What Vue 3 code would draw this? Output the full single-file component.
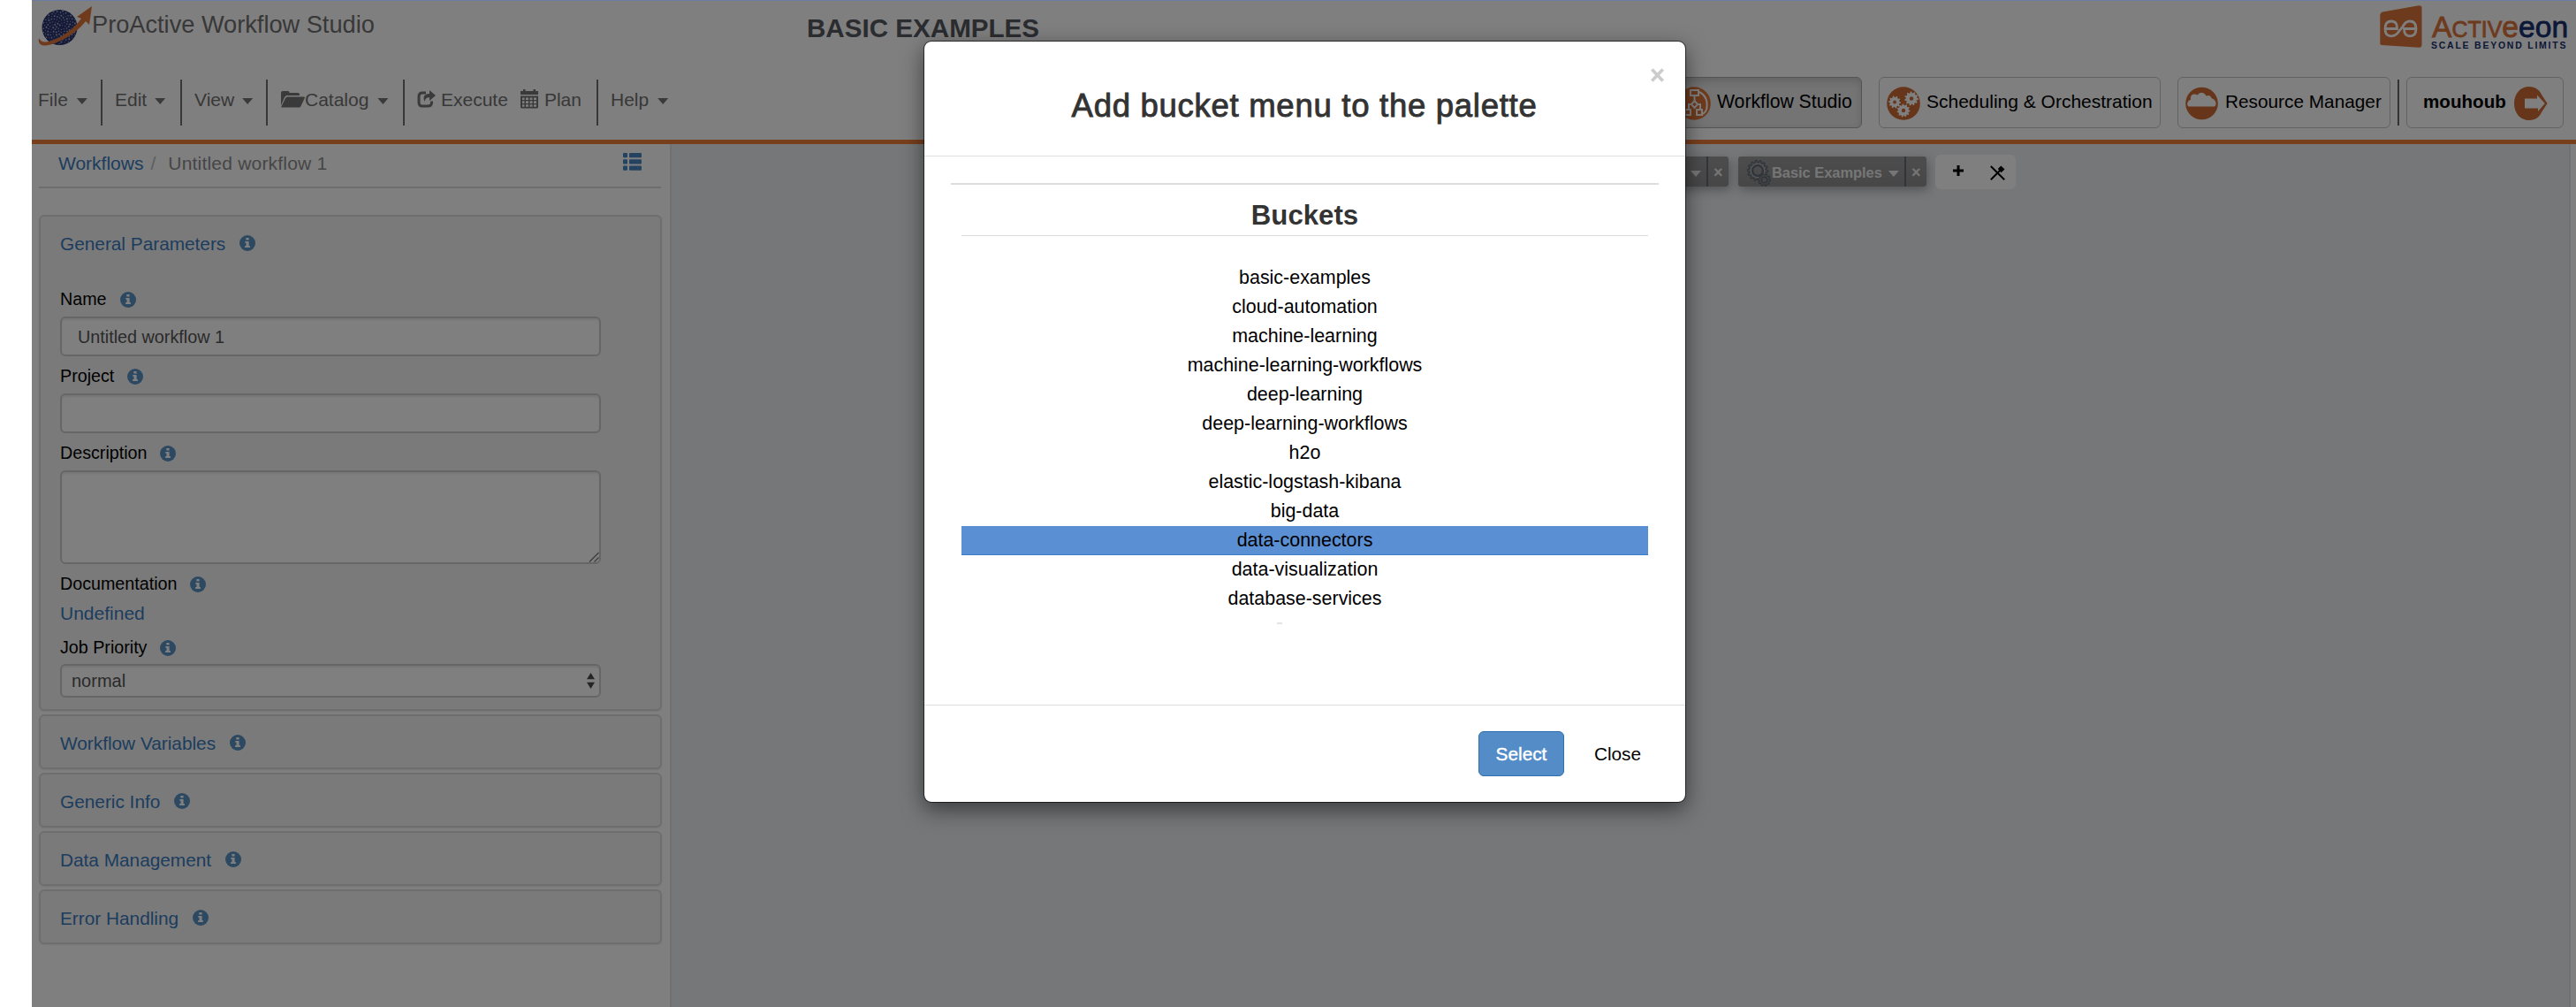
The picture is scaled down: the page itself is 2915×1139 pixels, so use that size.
<script setup>
import { h } from 'vue'

const InfoIcon = () =>
  h('svg', { class: 'info', viewBox: '0 0 18 18', width: 18, height: 18 }, [
    h('circle', { cx: 9, cy: 9, r: 9, fill: '#5a93c4' }),
    h('path', { d: 'M7.3 3h3.3v2.5H7.3zM6.3 7h4.3v5h1.3v2H6.1v-2h1.4V8.8H6.3z', fill: '#fff' }),
  ])

const sections = ['Workflow Variables', 'Generic Info', 'Data Management', 'Error Handling']
const buckets = [
  'basic-examples',
  'cloud-automation',
  'machine-learning',
  'machine-learning-workflows',
  'deep-learning',
  'deep-learning-workflows',
  'h2o',
  'elastic-logstash-kibana',
  'big-data',
  'data-connectors',
  'data-visualization',
  'database-services',
]
const selected = 'data-connectors'

// Cog outlines for the scheduler icon and the palette tab icon
function cog(cx, cy, r, teeth, depth) {
  const pts = []
  for (let i = 0; i < teeth * 4; i++) {
    const a = (i / (teeth * 4)) * Math.PI * 2
    const rr = i % 4 < 2 ? r : r - depth
    pts.push(`${(cx + rr * Math.cos(a)).toFixed(2)},${(cy + rr * Math.sin(a)).toFixed(2)}`)
  }
  return pts.join(' ')
}

// Light specks scattered over the globe
const specks = []
for (let i = 1; i < 120; i++) {
  const a = i * 2.39996
  const r = 19.4 * Math.sqrt(i / 120)
  specks.push({ x: 24.5 + r * Math.cos(a), y: 25 + r * Math.sin(a), r: 0.5 + ((i * 7) % 5) * 0.13 })
}
</script>

<template>
  <div class="screen">
    <div class="page">
      <header>
        <div class="brand-row">
          <svg class="globe" width="62" height="50" viewBox="0 0 62 50">
            <circle cx="24.5" cy="25" r="20" fill="#2a3570" />
            <circle v-for="(s, i) in specks" :key="i" :cx="s.x" :cy="s.y" :r="s.r" fill="#a5abc9" />
            <path d="M1 37C-1 47 9 47 19 43C36 36 47 27 54 18L58 22L61 1L44 13L49 15C40 27 29 35 18 39C10 42 4 43 1 37Z" fill="#e0773a" />
          </svg>
          <span class="app-name">ProActive Workflow Studio</span>
          <span class="workflow-name">BASIC EXAMPLES</span>
          <svg class="emblem" width="48" height="48" viewBox="0 0 48 48">
            <path d="M3 7.500L44 .2Q47.500 0 47.500 3V44.500Q47.500 48 44 47.700L2 45Q.3 44.800.3 43V11Q.5 8.200 3 7.500Z" fill="#dd753d" />
            <path d="M7 26.500H19.500Q20 18 13 18Q6 18 6 26.500Q6 34.800 13 34.800Q18 34.800 22 29L26 24Q29 18 34 18Q41 18 41 26.500Q41 34.800 34 34.800Q27.500 34.800 27.500 26.500H40" fill="none" stroke="#fff" stroke-width="2.800" />
          </svg>
          <div class="company">
            <div class="company-name"><span class="ac">A<small>CTIV</small>e</span><span class="eon">eon</span></div>
            <div class="tagline">SCALE BEYOND LIMITS</div>
          </div>
        </div>

        <div class="menu-row">
          <nav>
            <span class="item file">File<i class="caret" /></span>
            <span class="item edit">Edit<i class="caret" /></span>
            <span class="item view">View<i class="caret" /></span>
            <span class="item catalog">
              <svg width="27" height="20" viewBox="0 0 27 20" fill="#747474">
                <path d="M0 17V3Q0 1 2 1H8Q9.500 1 9.500 3H19Q21 3 21 5V6H7Q5 6 4 8L.5 16Z" />
                <path d="M7.500 7.500H26Q27.300 7.500 26.700 9L22.500 18Q22 19.500 20 19.500H1Q0 19.500.6 18L5 9Q5.800 7.500 7.500 7.500Z" />
              </svg>Catalog<i class="caret" />
            </span>
            <span class="item run">
              <svg class="exec" width="22" height="20" viewBox="0 0 22 20">
                <path d="M10 3H6Q2 3 2 7V14Q2 18 6 18H12Q16.500 18 16.500 14V12.500" fill="none" stroke="#747474" stroke-width="3" />
                <path d="M14 0L21 6L14 12V8.200Q9 8 8.500 13Q5 4.500 14 4Z" fill="#747474" />
              </svg>Execute
              <svg class="cal" width="20" height="22" viewBox="0 0 20 22" fill="#747474">
                <path d="M3 0H5.500V2H14.500V0H17V2H20V6H0V2H3Z" />
                <path fill-rule="evenodd" d="M0 7.500H20V20Q20 21.500 18.500 21.500H1.500Q0 21.500 0 20ZM2 9.500V12H4.500V9.500ZM6 9.500V12H9V9.500ZM10.500 9.500V12H13.500V9.500ZM15 9.500V12H18V9.500ZM2 13.200V16H4.500V13.200ZM6 13.200V16H9V13.200ZM10.500 13.200V16H13.500V13.200ZM15 13.200V16H18V13.200ZM2 17.200V19.700H4.500V17.200ZM6 17.200V19.700H9V17.200ZM10.500 17.200V19.700H13.500V17.200ZM15 17.200V19.700H18V17.200Z" />
              </svg>Plan
            </span>
            <span class="item help">Help<i class="caret" /></span>
          </nav>
          <div class="portals">
            <div class="portal studio active">
              <svg width="38" height="38" viewBox="0 0 38 38">
                <circle cx="19" cy="19" r="18.800" fill="#e0773a" />
                <g fill="none" stroke="#fff" stroke-width="2">
                  <rect x="15" y="4" width="9" height="6" />
                  <path d="M19.500 10V17M25 6Q36 12 33 26Q32 29 29 31M19.500 16L23 20L19.500 24L16 20ZM16 20H13V26M23 20H26V26" />
                  <rect x="9" y="26" width="6" height="6" /><rect x="22" y="26" width="6" height="6" />
                </g>
              </svg>
              <span>Workflow Studio</span>
            </div>
            <div class="portal sched">
              <svg width="38" height="38" viewBox="0 0 38 38">
                <circle cx="19" cy="19" r="18.800" fill="#cc6b34" />
                <g fill="#fff">
                  <polygon :points="cog(9, 17.500, 7, 10, 1.600)" />
                  <polygon :points="cog(28, 13.500, 8, 11, 1.800)" />
                  <polygon :points="cog(19, 27, 7.500, 11, 1.600)" />
                </g>
                <g fill="#cc6b34"><circle cx="9" cy="17.500" r="1.900" /><circle cx="28" cy="13.500" r="2.200" /><circle cx="19" cy="27" r="2.200" /></g>
              </svg>
              <span>Scheduling &amp; Orchestration</span>
            </div>
            <div class="portal resource">
              <svg width="37" height="38" viewBox="0 0 37 38">
                <circle cx="18.500" cy="19" r="18.300" fill="#cc6b34" />
                <path d="M3.500 22.500Q1 20 3 17Q3.500 15 6 14.800Q5 9 10 8.500Q12 8.300 13.500 9.500Q17 5 21.500 8Q23 9 23.500 10.500Q28 8.500 29.500 13Q35 15 34.500 20Q34 22.500 32.500 22.500Z" fill="#fff" />
              </svg>
              <span>Resource Manager</span>
            </div>
            <i class="bar" />
            <div class="portal user">
              <span>mouhoub</span>
              <svg width="38" height="38" viewBox="0 0 38 38">
                <path d="M17 0C24 0 29 4 31 9L37.500 19L31 29C29 34 24 38 17 38C7 38 0 30 0 19C0 8 7 0 17 0Z" fill="#cc6b34" />
                <path d="M12 13.500H26V9.500L34.800 19L27 28V24.500H12Z" fill="#fff" />
              </svg>
            </div>
          </div>
        </div>
      </header>

      <main>
        <aside>
          <div class="crumbs">
            <a>Workflows</a><span class="slash">/</span><span class="here">Untitled workflow 1</span>
            <svg class="list-icon" width="21" height="20" viewBox="0 0 21 20" fill="#4a86c2">
              <rect width="5" height="5.300" rx="1" /><rect x="7" width="14" height="5.300" rx="1" />
              <rect y="7.200" width="5" height="5.300" rx="1" /><rect x="7" y="7.200" width="14" height="5.300" rx="1" />
              <rect y="14.400" width="5" height="5.300" rx="1" /><rect x="7" y="14.400" width="14" height="5.300" rx="1" />
            </svg>
          </div>

          <section class="well general">
            <h4>General Parameters<InfoIcon /></h4>
            <label class="first">Name<InfoIcon /></label>
            <input type="text" value="Untitled workflow 1" />
            <label>Project<InfoIcon /></label>
            <input type="text" value="" />
            <label>Description<InfoIcon /></label>
            <div class="area">
              <textarea />
              <svg width="12" height="12" viewBox="0 0 12 12" stroke="#777" stroke-width="1.200"><path d="M1 11.500L11.500 1M6.500 11.500L11.500 6.500" /></svg>
            </div>
            <label class="doc">Documentation<InfoIcon /></label>
            <a class="undefined">Undefined</a>
            <label class="prio">Job Priority<InfoIcon /></label>
            <div class="select">
              normal
              <svg width="9" height="18" viewBox="0 0 9 18" fill="#4a4a4a"><path d="M0 7.300L4.500 0L9 7.300ZM0 10.700H9L4.500 18Z" /></svg>
            </div>
          </section>

          <section v-for="s in sections" :key="s" class="well">
            <h4>{{ s }}<InfoIcon /></h4>
          </section>
        </aside>

        <div class="canvas">
          <div class="tab first-tab"><i class="caret" /><b class="x">×</b></div>
          <div class="tab">
            <svg width="27" height="31" viewBox="0 0 27 31" fill="none" stroke="#5f6974">
              <polygon :points="cog(12, 13, 11.500, 14, 2)" stroke-width="1.300" />
              <circle cx="12" cy="13" r="6" stroke-width="2.400" />
              <circle cx="12" cy="13" r="7.600" stroke="#b5b9bd" stroke-width=".8" />
              <polygon :points="cog(19.500, 23.500, 7, 10, 1.500)" fill="#8c8c8c" stroke-width="1.200" />
              <circle cx="19.500" cy="23.500" r="3.200" stroke-width="1.600" />
            </svg>
            <span class="tab-name">Basic Examples</span><i class="caret" /><b class="x">×</b>
          </div>
          <div class="tools">
            <svg width="12" height="12" viewBox="0 0 12 12"><path d="M4.500 0H7.500V4.500H12V7.500H7.500V12H4.500V7.500H0V4.500H4.500Z" /></svg>
            <svg width="17" height="17" viewBox="0 0 17 17">
              <path d="M.8 1L16.200 16.200M.8 16.200L12 5" stroke="#000" stroke-width="2" />
              <path d="M8.800 4L12.300 .5L16.500 4.500L12.500 8.200Z" />
            </svg>
          </div>
        </div>
      </main>

      <div class="backdrop" />

      <div class="modal">
        <div class="modal-head">
          <h2>Add bucket menu to the palette</h2>
          <svg class="dismiss" width="15" height="16" viewBox="0 0 15 16" stroke="#ccc" stroke-width="3.600"><path d="M1.300 1.500L13.700 14.500M13.700 1.500L1.300 14.500" /></svg>
        </div>
        <div class="modal-body">
          <h3>Buckets</h3>
          <ul>
            <li v-for="b in buckets" :key="b" :class="{ selected: b === selected }">{{ b }}</li>
          </ul>
        </div>
        <div class="modal-foot">
          <button class="primary">Select</button>
          <button>Close</button>
        </div>
      </div>
    </div>
  </div>
</template>

<style>
body {
  margin: 0;
  background: #fff;
}
</style>

<style scoped>
* {
  box-sizing: border-box;
}
.screen {
  width: 2915px;
  height: 1139px;
  padding-left: 36px;
  overflow: hidden;
  background: #fff;
  font: 21px/30px "Liberation Sans", Arial, sans-serif;
  white-space: nowrap;
}
.page {
  position: relative;
  width: 2879px;
  height: 1139px;
  display: flex;
  flex-direction: column;
  background: #fff;
}
svg {
  display: block;
  flex: none;
}

/* header */
header {
  height: 163px;
  flex: none;
  border-bottom: 5px solid #f07f3a;
}
.brand-row {
  display: flex;
  height: 87px;
  padding: 6px 9px 0 7px;
}
.app-name {
  width: 809px;
  margin-left: -1px;
  font-size: 27.200px;
  line-height: 44px;
  color: #707070;
}
.workflow-name {
  font-size: 29.600px;
  font-weight: bold;
  line-height: 51px;
  color: #555860;
}
.emblem {
  margin-left: auto;
}
.company {
  width: 154px;
  margin-left: 11px;
}
.company-name {
  height: 38px;
  font-size: 33.600px;
  line-height: 50px;
  -webkit-text-stroke: 0.800px;
}
.company-name small {
  font-size: 25px;
}
.ac {
  color: #dd753d;
}
.eon {
  color: #17306f;
}
.tagline {
  font-size: 10.500px;
  font-weight: bold;
  line-height: 14px;
  letter-spacing: 1.760px;
  margin-left: -1px;
  color: #17306f;
}
.menu-row {
  display: flex;
  justify-content: space-between;
  height: 71px;
}
nav {
  display: flex;
  height: 52px;
  margin: 3px 0 0;
  color: #707070;
}
.item {
  display: flex;
  align-items: flex-start;
  line-height: 45px;
  padding-left: 14px;
  border-right: 2px solid #707070;
}
.item.file {
  width: 80px;
  padding-left: 7px;
}
.item.edit {
  width: 90px;
}
.item.view {
  width: 97px;
}
.item.catalog {
  width: 155px;
  padding-left: 15px;
}
.item.catalog svg {
  margin: 12px 0 0 0;
}
.item.run {
  width: 219px;
}
.exec {
  margin: 12px 5px 0 0;
}
.cal {
  margin: 11px 7px 0 14px;
}
.item.help {
  border: 0;
}
.caret {
  width: 12px;
  height: 7px;
  background: #747474;
  clip-path: polygon(0 0, 100% 0, 50% 100%);
}
.item .caret {
  margin: 21px 0 0 10px;
}
.item.edit .caret,
.item.view .caret {
  margin-left: 9px;
}
.portals {
  display: flex;
  margin-right: 14px;
  color: #000;
}
.portal {
  display: flex;
  height: 58px;
  padding: 10px 0 0 8px;
  border: 1px solid #c4c4c4;
  border-radius: 6px;
  line-height: 34px;
  margin-right: 19px;
}
.portal svg + span {
  margin-left: 7px;
}
.portal.active {
  border-color: #a8a8a8;
  background: #e8e8e8;
  box-shadow: inset 0 4px 8px rgba(0, 0, 0, 0.15);
}
.studio {
  width: 219px;
  padding-left: 9px;
  font-size: 21.200px;
}
.sched {
  width: 319px;
}
.resource {
  width: 241px;
  margin-right: 8px;
  font-size: 20.800px;
}
.resource svg + span {
  margin-left: 8px;
}
.bar {
  width: 2px;
  height: 52px;
  margin: 3px 8px 0 0;
  background: #666;
}
.user {
  width: 178px;
  margin-right: 0;
  padding-left: 18px;
  font-size: 20.600px;
  font-weight: bold;
}
.user svg {
  margin-left: 9px;
}

/* main */
main {
  display: flex;
  flex: 1;
  padding-right: 6px;
}
aside {
  width: 722px;
  padding: 0 10px 0 8px;
}
.crumbs {
  display: flex;
  height: 50px;
  padding-left: 22px;
  margin-bottom: 30px;
  border-bottom: 2px solid #dcdcdc;
  line-height: 43px;
  font-size: 21px;
}
a,
h4 {
  color: #3a7abd;
}
.slash {
  margin: 0 14px 0 8px;
  color: #bbb;
}
.here {
  color: #8c8c8c;
  letter-spacing: 0.200px;
}
.list-icon {
  margin: 10px 22px 0 auto;
}
.well {
  display: flex;
  flex-direction: column;
  width: 705px;
  height: 62px;
  margin-bottom: 4px;
  padding-left: 22px;
  background: #f5f5f5;
  border: 2px solid #dcdcdc;
  border-radius: 6px;
  box-shadow: 0 1px 2px rgba(0, 0, 0, 0.08);
}
.general {
  height: 561px;
}
h4 {
  display: flex;
  margin: 0;
  font-size: 20.800px;
  font-weight: normal;
  line-height: 61px;
}
h4 :deep(.info),
h4 .info {
  margin: 21px 0 0 16px;
}
label {
  display: flex;
  height: 42px;
  padding-top: 7px;
  font-size: 19.700px;
  line-height: 31px;
  color: #000;
}
label .info {
  margin: 7px 0 0 15px;
}
label.first {
  height: 52px;
  padding-top: 17px;
}
input,
textarea,
.select {
  display: block;
  width: 612px;
  height: 45px;
  margin: 0;
  padding: 2px 18px 0;
  font: 19.800px "Liberation Sans", Arial, sans-serif;
  color: #555;
  background: #fff;
  border: 2px solid #ccc;
  border-radius: 6px;
  box-shadow: inset 0 2px 2px rgba(0, 0, 0, 0.08);
}
.area {
  position: relative;
  width: 612px;
  height: 106px;
}
textarea {
  height: 106px;
  resize: none;
}
.area svg {
  position: absolute;
  right: 2px;
  bottom: 2px;
}
label.doc {
  height: 39px;
}
.undefined {
  font-size: 21px;
  line-height: 34px;
  height: 36px;
}
label.prio {
  height: 38px;
  padding-top: 4px;
}
.select {
  display: flex;
  justify-content: space-between;
  height: 38px;
  padding: 0 5px 0 11px;
  line-height: 35px;
  font-size: 20px;
}
.select svg {
  margin-top: 8px;
}

/* canvas */
.canvas {
  display: flex;
  flex: 1;
  padding-left: 1022px;
  background: #ebeef2;
  border: solid #dfe3e8;
  border-width: 0 2px;
}
.tab {
  display: flex;
  width: 213px;
  height: 34px;
  margin: 14px 11px 0 0;
  padding-left: 10px;
  background: linear-gradient(#9a9a9a, #8e8e8e);
  border-radius: 3px;
  box-shadow: 2px 4px 12px rgba(0, 0, 0, 0.3);
  color: #ececec;
  font-size: 16.400px;
  font-weight: bold;
  line-height: 36px;
}
.tab.first-tab {
  width: 174px;
  padding-left: 131px;
}
.tab svg {
  margin-top: 3px;
}
.tab-name {
  margin-left: 1px;
}
.tab .caret {
  margin: 16px 0 0 7px;
  background: #ececec;
}
.first-tab .caret {
  margin-left: 0;
}
.x {
  width: 25px;
  margin-left: auto;
  padding-left: 6px;
  border-left: 2px solid #636a72;
  font-size: 18px;
  color: #ececec;
}
.tools {
  display: flex;
  width: 91px;
  height: 39px;
  margin: 12px 0 0 -1px;
  padding: 12px 0 0 20px;
  gap: 30px;
  background: #fff;
  border-radius: 6px;
}

.backdrop {
  position: absolute;
  inset: 0;
  background: rgba(0, 0, 0, 0.5);
  border-top: 1px solid #6c7ba3;
}

/* dialog */
.modal {
  position: absolute;
  left: 1009px;
  top: 46px;
  width: 863px;
  height: 862px;
  display: flex;
  flex-direction: column;
  background: #fff;
  background-clip: padding-box;
  border: 1px solid rgba(0, 0, 0, 0.6);
  border-radius: 9px;
  box-shadow: 0 8px 24px rgba(0, 0, 0, 0.5);
  color: #000;
}
.modal-head {
  display: flex;
  justify-content: center;
  height: 130px;
  border-bottom: 1px solid #e0e0e0;
}
h2 {
  margin: 0;
  padding-left: 28px;
  flex: 1;
  text-align: center;
  font-size: 36.500px;
  font-weight: normal;
  letter-spacing: 0.720px;
  line-height: 145px;
  color: #333;
  -webkit-text-stroke: 0.900px #333;
}
.dismiss {
  margin: 30px 24px 0 -10px;
}
.modal-body {
  height: 620px;
  padding: 30px 30px 0;
}
h3 {
  margin: 0;
  border-top: 2px solid #ddd;
  font-size: 31.200px;
  line-height: 69px;
  height: 59px;
  text-align: center;
  color: #333;
}
ul {
  margin: 0 12px;
  padding: 31px 0 0;
  height: 437px;
  list-style: none;
  border-top: 1px solid #ddd;
  text-align: center;
}
li {
  height: 33px;
  font-size: 21.450px;
  line-height: 33px;
}
/* edge of the row scrolled out of view */
ul::after {
  content: '';
  display: block;
  width: 6px;
  height: 2px;
  margin: 10px 0 0 357px;
  background: #e4e4e4;
}
li.selected {
  background: #5a8fd3;
  border-bottom: 1px solid #3a7fcb;
}
.modal-foot {
  display: flex;
  justify-content: flex-end;
  padding: 29px 28px 0 0;
  border-top: 1px solid #e0e0e0;
  flex: 1;
}
button {
  width: 97px;
  height: 51px;
  padding: 0;
  margin-left: 12px;
  border: 0;
  border-radius: 6px;
  background: none;
  font: 20.800px "Liberation Sans", Arial, sans-serif;
  color: #000;
}
.primary {
  background: #538cc7;
  border: 1px solid #2e70b0;
  color: #fff;
  -webkit-text-stroke: 0.400px #fff;
}
</style>
